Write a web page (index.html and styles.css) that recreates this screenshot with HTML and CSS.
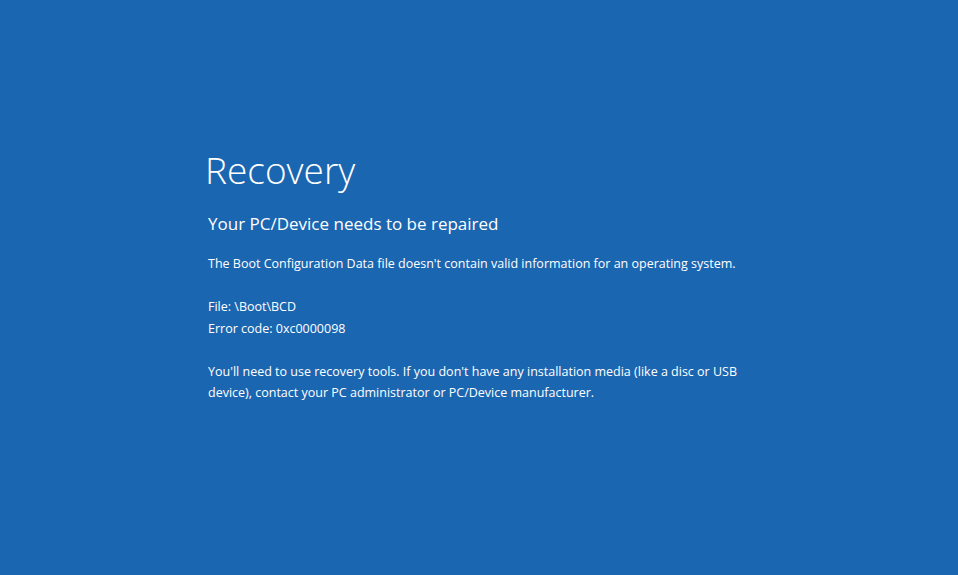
FILE: index.html
```html
<!DOCTYPE html>
<html lang="en">
<head>
  <meta charset="UTF-8">
  <meta name="viewport" content="width=device-width, initial-scale=1.0">
  <title>Recovery</title>
  <link rel="stylesheet" href="styles.css">
</head>
<body>
  <div class="pantalla">
    <h1 class="titulo">Recovery</h1>
    <h2 class="subtitulo">Your PC/Device needs to be repaired</h2>
    <p class="texto">The Boot Configuration Data file doesn't contain valid information for an operating system.</p>
    <p class="texto">File: \Boot\BCD<br>Error code: 0xc0000098</p>
    <p class="texto">You'll need to use recovery tools. If you don't have any installation media (like a disc or USB<br>device), contact your PC administrator or PC/Device manufacturer.</p>
  </div>
</body>
</html>
```

FILE: styles.css
```css
body {
  margin: 0;
  padding: 0;
  background-color: #1b66b1;
  font-family: 'Open Sans', sans-serif;
  color: #fff;
}

.pantalla {
  width: 958px;
  height: 575px;
  box-sizing: border-box;
  padding: 145px 0 0 208px;
}

.titulo {
  font-weight: 300;
  font-size: 37px;
  line-height: 50px;
  margin: 0 0 0 -3px;
}

.subtitulo {
  font-weight: 400;
  font-size: 17px;
  line-height: 26px;
  margin: 16px 0 16px;
}

.texto {
  font-size: 12.5px;
  line-height: 21.5px;
  margin: 0 0 21.5px;
}
```
